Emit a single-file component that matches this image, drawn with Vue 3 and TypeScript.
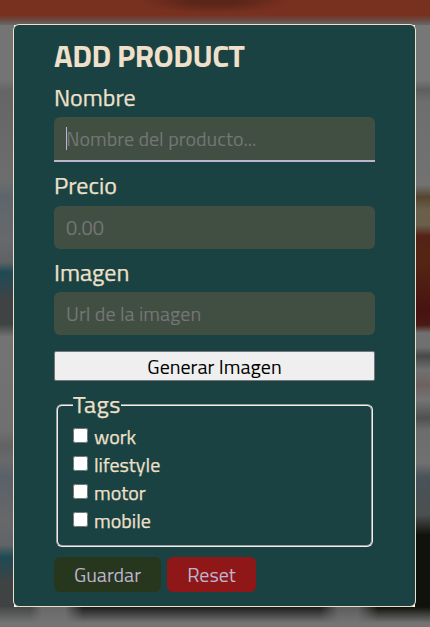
<script setup lang="ts">
import { onMounted, reactive, ref } from 'vue'

interface Product {
  nombre: string
  precio: string
  imagen: string
  tags: string[]
}

const tags: string[] = ['work', 'lifestyle', 'motor', 'mobile']
const product = reactive<Product>({ nombre: '', precio: '', imagen: '', tags: [] })
const nameInput = ref<HTMLInputElement | null>(null)

function reset(): void {
  Object.assign(product, { nombre: '', precio: '', imagen: '', tags: [] })
}

onMounted(() => nameInput.value?.focus())
</script>

<template>
  <div class="page">
    <form class="dialog" @submit.prevent @reset="reset">
      <h1 class="title">ADD PRODUCT</h1>

      <label class="label nombre" for="nombre">Nombre</label>
      <div class="control active">
        <span class="caret"></span>
        <input id="nombre" ref="nameInput" v-model="product.nombre" class="field field-name" type="text" placeholder="Nombre del producto..." />
      </div>

      <label class="label precio" for="precio">Precio</label>
      <input id="precio" v-model="product.precio" class="field" type="text" placeholder="0.00" />

      <label class="label imagen" for="imagen">Imagen</label>
      <input id="imagen" v-model="product.imagen" class="field field-url" type="text" placeholder="Url de la imagen" />

      <button class="generate" type="button">Generar Imagen</button>

      <fieldset class="tags">
        <legend>Tags</legend>
        <label v-for="tag in tags" :key="tag" class="tag">
          <input v-model="product.tags" type="checkbox" :value="tag" />
          <span>{{ tag }}</span>
        </label>
      </fieldset>

      <div class="actions">
        <button class="save" type="submit">Guardar</button>
        <button class="reset" type="reset">Reset</button>
      </div>
    </form>
  </div>
</template>

<style>
body {
  overflow: hidden;
}
</style>

<style scoped>
.page {
  box-sizing: border-box;
  width: 430px;
  height: 627px;
  padding: 24px 14px 20px 13px;
  font-family: 'Titillium Web', Roboto, sans-serif;
  background:
    radial-gradient(ellipse 75px 13px at 214px 0, #5a261a 0 35%, transparent) 0 0 / 430px 15px no-repeat,
    linear-gradient(#78301f 0 15px, #6a4a42 20px, #686868 25px) 0 0 / 430px 25px no-repeat,
    linear-gradient(transparent, #747474 16px) 0 607px / 430px 20px no-repeat,
    linear-gradient(90deg, #454646 0 30px, #686868 42px 65px, #1b1c1b 83px 320px, #5c5c5c 338px 358px, #12120c 378px) 0 607px / 430px 20px no-repeat,
    linear-gradient(#747474 24px 80px, #656565 90px, #6d6d6d 180px, #5d666d 196px, #67696b 240px, #5f6265 262px, #1f4a54 272px, #2c4850 285px, #3f4343 298px 324px, #737373 337px, #707070 430px, #626262 446px, #68696a 460px, #596169 477px, #676869 520px, #606468 545px, #1f4a54 557px, #3f4343 582px 627px) 0 0 / 14px 627px no-repeat,
    linear-gradient(#777 24px 80px, #5f5f5f 90px, #6f6e6f 102px, #727272 185px, #55452f 197px, #6b5f4c 210px 225px, #552215 236px, #552613 260px, #481210 312px, #4a1a15 325px, #707070 333px 347px, #484848 356px, #707070 370px, #6e6260 385px, #747474 400px, #505050 418px, #6c6c6c 430px, #707070 463px, #495359 477px, #4b4f4f 515px, #12120c 535px 627px) 100% 0 / 15px 627px no-repeat;
}

.dialog {
  box-sizing: border-box;
  display: flex;
  flex-direction: column;
  height: 583px;
  padding: 11px 40px 14px;
  border: 1px solid #eee0c9;
  border-radius: 6px;
  background: #1b4242;
  color: #eee0cb;
}

.title {
  flex: none;
  height: 41px;
  margin: 0;
  font-size: 31px;
  line-height: 40px;
  font-weight: 700;
  letter-spacing: -0.5px;
  white-space: nowrap;
}

.label {
  flex: none;
  height: 40px;
  font-size: 24px;
  line-height: 41px;
  -webkit-text-stroke: 0.25px #eee0cb;
}

.precio {
  height: 44px;
  line-height: 46px;
}

.imagen {
  height: 43px;
  line-height: 46px;
}

.control {
  position: relative;
  flex: none;
  height: 45px;
}

.caret {
  position: absolute;
  left: 12px;
  top: 10px;
  width: 1px;
  height: 23px;
  background: #bdb4d0;
}

.field {
  box-sizing: border-box;
  flex: none;
  display: block;
  width: 100%;
  height: 43px;
  padding: 0 12px;
  border: 0;
  border-radius: 6px;
  outline: none;
  background: #414f43;
  color: #bdb4d0;
  caret-color: transparent;
  font: 20px 'Titillium Web', Roboto, sans-serif;
}

.field::placeholder {
  color: #757575;
  opacity: 1;
}

.active .field {
  height: 45px;
  border-bottom: 2px solid #bdb4d0;
  border-radius: 6px 6px 0 0;
}

.generate {
  box-sizing: border-box;
  flex: none;
  height: 30px;
  margin: 16px 0 0;
  padding: 2px 0 0;
  border: 1px solid #767676;
  border-radius: 2px;
  background: #efefef;
  color: #000;
  font: 20px/26px 'Titillium Web', Roboto, sans-serif;
}

.tags {
  box-sizing: border-box;
  flex: none;
  height: 156px;
  margin: 10px 2px 0;
  padding: 2px 15px 0;
  border: 2px groove #f0f0f0;
  border-radius: 6px;
}

.tags legend {
  height: 28px;
  padding: 0;
  font-size: 24px;
  line-height: 26px;
  letter-spacing: 0.5px;
  -webkit-text-stroke: 0.25px #eee0cb;
}

.tag {
  display: flex;
  align-items: center;
  height: 28px;
  gap: 6px;
  font-size: 20px;
  line-height: 28px;
  -webkit-text-stroke: 0.25px #eee0cb;
}

.tag span {
  padding-top: 3px;
}

.tag input {
  flex: none;
  width: 15px;
  height: 15px;
  margin: 0;
}

.actions {
  display: flex;
  gap: 6px;
  margin-top: 10px;
}

.actions button {
  height: 35px;
  padding: 0;
  border: 0;
  border-radius: 6px;
  color: #bdb4d0;
  font: 20px/35px 'Titillium Web', Roboto, sans-serif;
}

.actions .save {
  width: 107px;
  background: #26371d;
}

.actions .reset {
  width: 89px;
  background: #8f1717;
}
</style>
